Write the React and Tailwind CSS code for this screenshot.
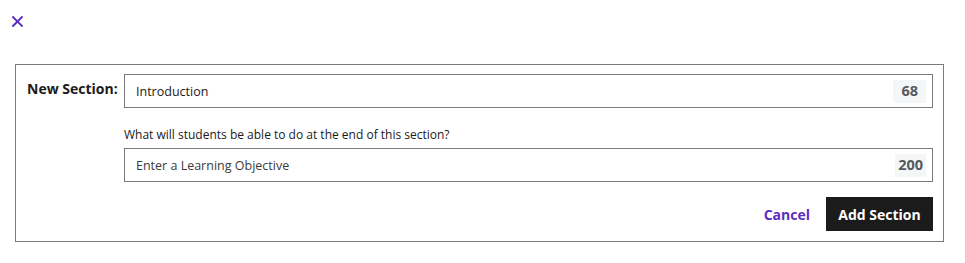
export default function App() {
  return (
    <div className="w-[965px] h-[263px] bg-white font-['Open_Sans',sans-serif] text-[#1b1b1b]">
      <div className="pt-[15px] pl-[11px]">
        <button className="text-[#5b2ec2] w-[12px] h-[12px] flex items-center justify-center">
          <svg width="11" height="11" viewBox="0 0 10 10" fill="none" stroke="currentColor" strokeWidth="1.8" strokeLinecap="square">
            <path d="M1 1L9 9M9 1L1 9" />
          </svg>
        </button>
      </div>

      <div className="ml-[15px] mt-[37px] w-[929px] border border-[#7a7a7a] pt-[9px] pb-[10px] pr-[10px] flex">
        <label className="w-[108px] shrink-0 pl-[11px] pt-[5px] font-bold text-[14px] leading-[20px]">
          New Section:
        </label>
        <div className="flex-1 flex flex-col">
          <div className="h-[34px] border border-[#7a7a7a] flex items-center pl-[11px] pr-[6px]">
            <span className="flex-1 text-[12.5px] pt-[3px]">Introduction</span>
            <span className="bg-[#f5f6f8] text-[#555a60] font-bold text-[14.5px] px-[8px] h-[23px] flex items-center">68</span>
          </div>
          <p className="text-[12px] mt-[18px] leading-[17px]">What will students be able to do at the end of this section?</p>
          <div className="h-[34px] mt-[5px] border border-[#7a7a7a] flex items-center pl-[11px] pr-[6px]">
            <span className="flex-1 text-[12.5px] pt-[2px] text-[#3b3b3b]">Enter a Learning Objective</span>
            <span className="bg-[#f5f6f8] text-[#555a60] font-bold text-[14.5px] px-[3px] h-[23px] flex items-center">200</span>
          </div>
          <div className="flex justify-end items-center gap-[16px] mt-[15px]">
            <button className="text-[#5b2ec2] font-bold text-[14px]">Cancel</button>
            <button className="bg-[#1b1b1b] text-white font-bold text-[14px] h-[34px] w-[107px]">Add Section</button>
          </div>
        </div>
      </div>
    </div>
  );
}
